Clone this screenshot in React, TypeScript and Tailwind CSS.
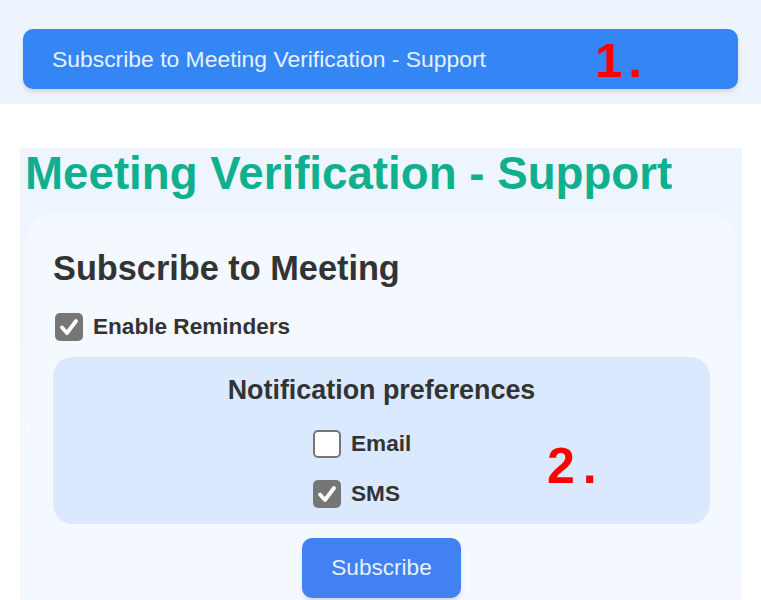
import React, { useState } from 'react';

const font = { fontFamily: '"Liberation Sans", Arial, sans-serif' };

const Box: React.FC<{ checked: boolean; onClick: () => void }> = ({ checked, onClick }) => (
  <button
    type="button"
    onClick={onClick}
    className={
      checked
        ? 'w-[28px] h-[28px] rounded-[5px] bg-[#767676] flex items-center justify-center shrink-0'
        : 'w-[28px] h-[28px] rounded-[5px] bg-white border-2 border-[#767676] shrink-0'
    }
  >
    {checked && (
      <svg width="22" height="22" viewBox="0 0 22 22">
        <path d="M4 11.5 L9 17 L18 5" fill="none" stroke="white" strokeWidth="3.8" strokeLinecap="round" strokeLinejoin="round" />
      </svg>
    )}
  </button>
);

const Row: React.FC<{ label: string; checked: boolean; onClick: () => void }> = ({ label, checked, onClick }) => (
  <label className="flex items-center gap-[10px] cursor-pointer">
    <Box checked={checked} onClick={onClick} />
    <span className="text-[22.6px] font-bold text-[#333] leading-none">{label}</span>
  </label>
);

export default function App() {
  const [reminders, setReminders] = useState(true);
  const [email, setEmail] = useState(false);
  const [sms, setSms] = useState(true);

  return (
    <div className="min-h-[600px] bg-white" style={font}>
      {/* toggle bar */}
      <div className="bg-[#eef4fe] px-[23px] pt-[29px] pb-[15px]">
        <div className="relative h-[60px] rounded-[10px] bg-[#3486f5] shadow-md flex items-center pl-[29px]">
          <span className="text-[22.9px] text-[#e8f0ff] pt-[1px]">Subscribe to Meeting Verification - Support</span>
          <span className="absolute left-[572px] top-[7px] text-[49px] font-bold text-[#ff0000] tracking-[6px] leading-none">
            1.
          </span>
        </div>
      </div>

      <div className="h-[44px]" />

      {/* panel */}
      <div className="mx-[20px] w-[722px] bg-gradient-to-b from-[#eef5ff] to-[#f5f9ff] pt-[3px] overflow-hidden">
        <h1 className="h-[46px] pl-[5px] text-[45.7px] font-bold leading-none text-[#10b08f]">Meeting Verification - Support</h1>

        <div className="mt-[16px] mx-[5px] rounded-t-[30px] bg-[#f4f8ff] pl-[28px] pr-[27px] pt-[38px]">
          <h2 className="h-[34px] text-[34.3px] font-bold leading-none text-[#333]">Subscribe to Meeting</h2>

          <div className="mt-[28px] pl-[2px]">
            <Row label="Enable Reminders" checked={reminders} onClick={() => setReminders(!reminders)} />
          </div>

          <div className="relative mt-[16px] rounded-[20px] bg-[#dbe9fe] pt-[20px] pb-[16px]">
            <h3 className="h-[27px] text-center text-[26.88px] font-bold leading-none text-[#333]">Notification preferences</h3>
            <div className="mt-[26px] flex flex-col gap-[22px] w-[137px] mx-auto">
              <Row label="Email" checked={email} onClick={() => setEmail(!email)} />
              <Row label="SMS" checked={sms} onClick={() => setSms(!sms)} />
            </div>
            <span className="absolute left-[494px] top-[84px] text-[50px] font-bold text-[#ff0000] tracking-[8px] leading-none">
              2.
            </span>
          </div>

          <div className="flex justify-center pt-[14px] pb-[2px]">
            <button type="button" className="w-[159px] h-[60px] rounded-[10px] bg-[#4181f2] text-[22.6px] text-[#e8f0ff] shadow-md">
              Subscribe
            </button>
          </div>
        </div>
      </div>
    </div>
  );
}
